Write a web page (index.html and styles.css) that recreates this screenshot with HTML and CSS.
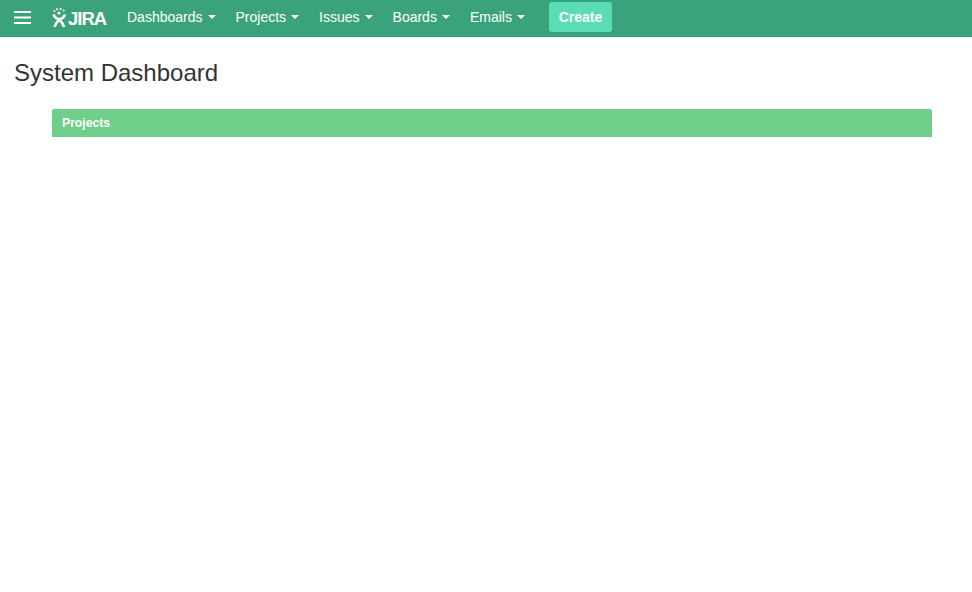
FILE: index.html
```html
<!DOCTYPE html>
<html lang="en">
<head>
<meta charset="utf-8">
<title>System Dashboard</title>
<link rel="stylesheet" href="styles.css">
</head>
<body>
<header class="navbar">
  <button class="menu-toggle" aria-label="Menu">
    <svg width="17" height="13" viewBox="0 0 17 13"><path d="M0 1h17M0 6.5h17M0 12h17" stroke="#fff" stroke-width="2" fill="none"/></svg>
  </button>
  <a class="logo">
    <svg class="logo-mark" width="15" height="20" viewBox="0 0 15 20">
      <g fill="#fff">
        <circle cx="2.4" cy="3" r="1"/><circle cx="5" cy="1.2" r="1"/><circle cx="8.6" cy="0.9" r="1"/><circle cx="11.6" cy="2.4" r="1"/>
        <circle cx="7" cy="5" r="1.6"/>
      </g>
      <path d="M1.4 6.5 C3 10 5 11 7.3 11.5 C9.6 11 11.6 10 13.2 6.5 M2.6 19 C3.4 15.5 5.4 13.5 7.3 11.5 C9.2 13.5 11.2 15.5 12 19" stroke="#fff" stroke-width="2.6" fill="none"/>
    </svg>
    <span class="logo-text">JIRA</span>
  </a>
  <nav class="nav-links">
    <a class="nav-link">Dashboards<i class="caret"></i></a>
    <a class="nav-link">Projects<i class="caret"></i></a>
    <a class="nav-link">Issues<i class="caret"></i></a>
    <a class="nav-link">Boards<i class="caret"></i></a>
    <a class="nav-link">Emails<i class="caret"></i></a>
  </nav>
  <button class="create">Create</button>
</header>
<main class="content">
  <h1 class="title">System Dashboard</h1>
  <section class="panel">
    <div class="panel-heading">Projects</div>
  </section>
</main>
</body>
</html>
```
FILE: styles.css
```css
* { box-sizing: border-box; }
html, body { margin: 0; padding: 0; background: #fff; }
body { font-family: "Liberation Sans", Arial, sans-serif; color: #333; }
.navbar {
  display: flex;
  align-items: center;
  height: 38px;
  background: #3ba37c;
  border-bottom: 1px solid #dff6ec;
  padding-left: 14px;
  padding-bottom: 3px;
}
.menu-toggle {
  display: flex;
  background: none;
  border: 0;
  padding: 0;
  margin-right: 21px;
}
.logo {
  display: flex;
  align-items: flex-end;
  color: #fff;
  margin-right: 11px;
  height: 22px;
}
.logo-mark { display: block; margin-right: 1px; }
.logo-text {
  font-size: 18.5px;
  line-height: 18px;
  font-weight: 700;
  letter-spacing: -1px;
  width: 38px;
}
.nav-links { display: flex; }
.nav-link {
  display: flex;
  align-items: center;
  color: #fff;
  font-size: 14px;
  line-height: 20px;
  padding: 0 10px;
}
.caret {
  width: 0;
  height: 0;
  margin-left: 5px;
  border-top: 4px solid #fff;
  border-left: 4px solid transparent;
  border-right: 4px solid transparent;
}
.create {
  margin-left: 14px;
  width: 63px;
  height: 30px;
  background: #5adcb5;
  color: #fff;
  font: 700 14px "Liberation Sans", Arial, sans-serif;
  border: 0;
  border-radius: 3px;
  padding: 0;
}
.content { padding: 0 40px 0 14px; }
.title {
  margin: 21px 0 22px;
  font-size: 24px;
  line-height: 28px;
  font-weight: 400;
  color: #333;
}
.panel { margin-left: 38px; width: 880px; }
.panel-heading {
  height: 28px;
  line-height: 28px;
  padding-left: 10px;
  background: #6fcf88;
  border-radius: 2px 2px 0 0;
  color: #fff;
  font-size: 12.2px;
  font-weight: 700;
}
```
